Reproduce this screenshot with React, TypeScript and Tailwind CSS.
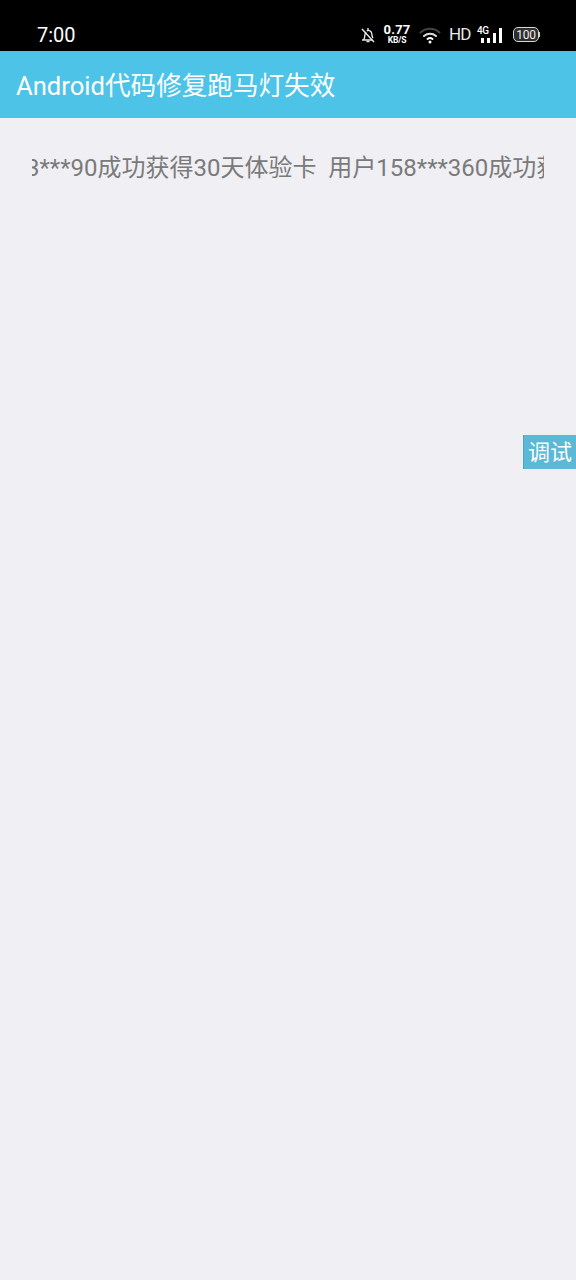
export default function App() {
  return (
    <div className="relative flex h-[1280px] w-[576px] flex-col overflow-hidden bg-[#efeff4] font-['Roboto','Noto_Sans_CJK_SC',sans-serif]">
      {/* Status bar */}
      <div className="flex h-[51px] items-center justify-between bg-black pl-[37px] pr-[36px] pt-[18px] text-white">
        <span className="text-[20px] leading-none">7:00</span>
        <div className="flex items-center">
          <svg width="16" height="16" viewBox="0 0 16 16" fill="none" stroke="#e8e8e8" strokeWidth="1.4" className="mr-[8px]">
            <path d="M2 13h10.500M3.500 13c1.200-1.400 1.300-3 1.400-5 .1-1.300.5-2.200 1.200-2.900M6.800 3.900C7.800 3.300 9 3.300 10 3.800c1.300.7 1.800 2 1.900 3.500.1 1.500.3 2.700 1.100 3.700" />
            <path d="M6.500 14.500h3M8 1v2M2 2l12 13" />
          </svg>
          <div className="mr-[9px] flex w-[26px] flex-col items-center font-bold leading-none">
            <span className="text-[13px] leading-[12px] tracking-[0.2px]">0.77</span>
            <span className="text-[8.500px] leading-[9px] tracking-[-0.2px]">KB/S</span>
          </div>
          <svg width="22" height="18" viewBox="0 0 22 18" fill="none" strokeLinecap="round" className="mr-[8px]">
            <path d="M1.500 6.500C7 1.500 15 1.500 20.500 6.500" stroke="#444" strokeWidth="2" />
            <path d="M5 10c3.500-3 8.500-3 12 0" stroke="#ddd" strokeWidth="2" />
            <path d="M8.500 13c1.500-1.200 3.500-1.200 5 0" stroke="#fff" strokeWidth="2" />
            <circle cx="11" cy="16" r="1.500" fill="#fff" />
          </svg>
          <span className="mr-[7px] w-[21px] text-[17px] leading-none tracking-[-1px] text-[#e8e8e8]">HD</span>
          <div className="relative mr-[11px] flex h-[16px] w-[25px] items-end justify-end gap-[3px]">
            <span className="absolute left-0 top-[-1px] text-[10px] font-medium leading-none tracking-[-0.5px]">4G</span>
            <span className="h-[5px] w-[3px] bg-white" />
            <span className="h-[5px] w-[3px] bg-white" />
            <span className="h-[10px] w-[3px] bg-white" />
            <span className="h-[15px] w-[3px] bg-white" />
          </div>
          <div className="flex items-center">
            <div className="flex h-[15px] w-[26px] items-center justify-center rounded-[5px] border border-[#d8d8d8] bg-[#2e2e2e] text-[12px] leading-none tracking-[-0.3px] text-[#eeeeee]">
              100
            </div>
            <span className="h-[5px] w-[1px] bg-[#cfcfcf]" />
          </div>
        </div>
      </div>

      {/* App bar */}
      <div className="flex h-[67px] items-center bg-[#4dc3e7] pl-[16px] pt-[4px]">
        <h1 className="text-[25.6px] font-normal leading-none text-white">Android代码修复跑马灯失效</h1>
      </div>

      {/* Marquee */}
      <div className="mx-[32px] mt-[32px] overflow-hidden">
        <p className="ml-[-81px] whitespace-pre text-[24px] leading-[36px] text-[#7a7a7a]">
          用户133***90成功获得30天体验卡  用户158***360成功获得30天体验卡
        </p>
      </div>

      {/* Debug button */}
      <div className="absolute right-0 top-[435px] flex h-[34px] w-[53px] items-center justify-center border-l border-[#4aa9c9] bg-[#5bb8d6] pt-[2px] text-[22px] leading-none text-white">
        调试
      </div>
    </div>
  )
}
